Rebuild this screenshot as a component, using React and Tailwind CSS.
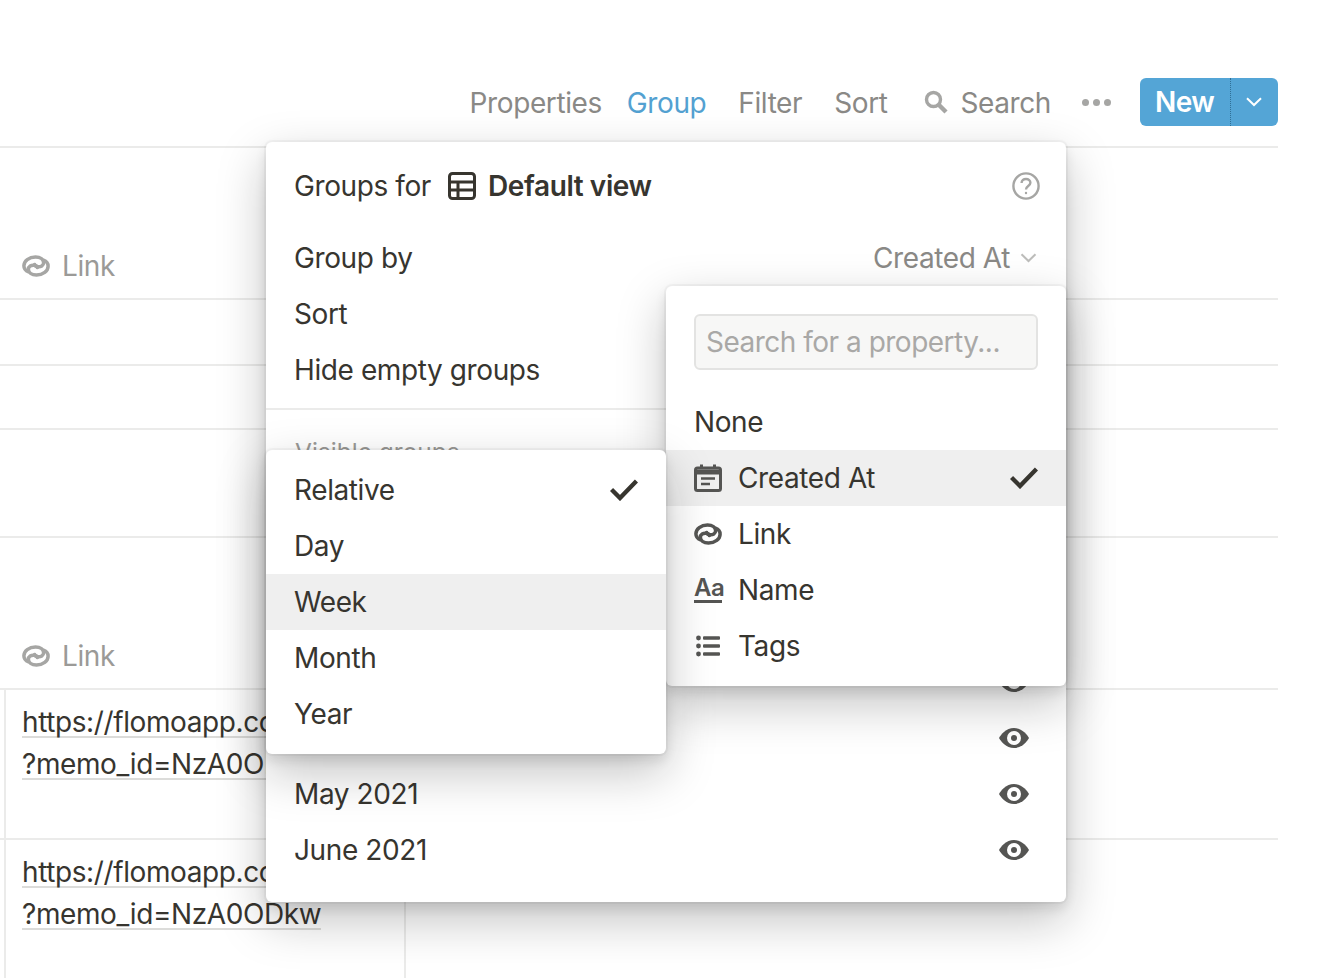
import React from "react";

function LinkIcon({ className = "" }) {
  return (
    <svg viewBox="0 0 28 22" className={className} fill="none" stroke="currentColor" strokeWidth="3.5" strokeLinecap="round">
      <path d="M6.5 16.8 C3.6 15.8 1.9 13.6 1.9 10.8 C1.9 6 7 2.1 13.5 2.1 C18.5 2.1 21.6 4.6 21.6 7.8 C21.6 10.6 18.8 12.2 15.8 11.8 C14 11.5 12.8 10.6 12.6 9.4" />
      <path d="M21.5 5.2 C24.4 6.2 26.1 8.4 26.1 11.2 C26.1 16 21 19.9 14.5 19.9 C9.5 19.9 6.4 17.4 6.4 14.2 C6.4 11.4 9.2 9.8 12.2 10.2 C14 10.5 15.2 11.4 15.4 12.6" />
    </svg>
  );
}

function Eye() {
  return (
    <svg viewBox="0 0 30 20" className="h-[20px] w-[30px] text-[#555553]">
      <path fill="currentColor" d="M15 0 C23 0 28 6.5 30 10 C28 13.5 23 20 15 20 C7 20 2 13.5 0 10 C2 6.5 7 0 15 0 Z" />
      <circle cx="15" cy="10" r="7" fill="#fff" />
      <circle cx="15" cy="10" r="3" fill="currentColor" />
    </svg>
  );
}

function Check() {
  return (
    <svg viewBox="0 0 28 22" className="h-[22px] w-[28px] text-[#37352f]" fill="none" stroke="currentColor" strokeWidth="4.4">
      <path d="M1.5 10.5 L10 19 L26.5 2" />
    </svg>
  );
}

function Chevron({ className = "" }) {
  return (
    <svg viewBox="0 0 16 10" className={className} fill="none" stroke="currentColor" strokeWidth="2">
      <path d="M1 1.2 L8 8 L15 1.2" />
    </svg>
  );
}

function TableRow({ h, children, className = "" }) {
  return <div className={`border-t-2 border-[#ebebea] ${h} ${className}`}>{children}</div>;
}

function LinkHeader() {
  return (
    <div className="flex h-full items-end pb-[14px] pl-[22px] text-[#9b9a97]">
      <LinkIcon className="mb-[7px] mr-[12px] h-[22px] w-[28px] text-[#a6a6a4]" />
      <span>Link</span>
    </div>
  );
}

function UrlCell() {
  return (
    <div className="h-full w-[402px] border-l-2 border-r-2 border-[#ebebea] pl-[16px] pt-[14px] text-[#37352f]">
      <div className="h-[42px]"><span className="inline-block whitespace-nowrap border-b-2 border-[#dcdcda] leading-[28px]">https://flomoapp.com/mine/</span></div>
      <div className="h-[42px]"><span className="inline-block whitespace-nowrap border-b-2 border-[#dcdcda] leading-[28px]">?memo_id=NzA0ODkw</span></div>
    </div>
  );
}

function MenuRow({ children, right, active }) {
  return (
    <div className={`flex h-[56px] items-center justify-between pl-[28px] pr-[28px] ${active ? "bg-[#efefef]" : ""}`}>
      {children}
      {right}
    </div>
  );
}

const shadow = "shadow-[0_0_0_2px_rgba(15,15,15,0.03),0_6px_12px_rgba(15,15,15,0.1),0_18px_48px_rgba(15,15,15,0.25)]";

export default function App() {
  return (
    <div className="relative h-[978px] w-[1324px] overflow-hidden bg-white text-[28px] leading-[36px] tracking-[-0.4px] text-[#37352f]" style={{ fontFamily: "Inter, 'Noto Sans', sans-serif" }}>
      {/* toolbar */}
      <div className="flex h-[146px] items-start justify-end pr-[46px] pt-[78px] text-[#8a8986]">
        <div className="flex h-[48px] items-center">
          <span className="mr-[25px] pt-[2px]">Properties</span>
          <span className="mr-[32px] pt-[2px] text-[#53a1d1]">Group</span>
          <span className="mr-[32px] pt-[2px]">Filter</span>
          <span className="mr-[37px] pt-[2px]">Sort</span>
          <svg viewBox="0 0 24 24" className="mr-[12px] h-[24px] w-[24px] text-[#a6a6a4]" fill="none" stroke="currentColor">
            <circle cx="9.5" cy="9.5" r="7" strokeWidth="3.4" />
            <path d="M14.5 14.5 L22 22" strokeWidth="4.4" />
          </svg>
          <span className="mr-[31px] pt-[2px]">Search</span>
          <span className="mr-[29px] flex gap-[4px]">
            <i className="h-[7px] w-[7px] rounded-full bg-[#a6a6a4]" />
            <i className="h-[7px] w-[7px] rounded-full bg-[#a6a6a4]" />
            <i className="h-[7px] w-[7px] rounded-full bg-[#a6a6a4]" />
          </span>
          <div className="flex h-[48px] w-[138px] overflow-hidden rounded-[6px] bg-[#54a5d6] text-white">
            <div className="flex w-[91px] items-center border-r border-dotted border-[#2f6f96] pl-[15px] font-semibold tracking-[-0.6px]">New</div>
            <div className="flex flex-1 items-center justify-center pr-[2px]">
              <Chevron className="h-[10px] w-[16px]" />
            </div>
          </div>
        </div>
      </div>

      {/* table behind the menus */}
      <div className="w-[1278px]">
        <TableRow h="h-[152px]"><LinkHeader /></TableRow>
        <TableRow h="h-[66px]" />
        <TableRow h="h-[64px]" />
        <TableRow h="h-[108px]" />
        <TableRow h="h-[152px]"><LinkHeader /></TableRow>
        <TableRow h="h-[150px]" className="pl-[4px]"><UrlCell /></TableRow>
        <TableRow h="h-[140px]" className="pl-[4px]"><UrlCell /></TableRow>
      </div>

      {/* main panel */}
      <div className={`absolute left-[266px] top-[142px] h-[760px] w-[800px] rounded-[6px] bg-white ${shadow}`}>
        <div className="flex h-[88px] items-center justify-between pl-[28px] pr-[26px]">
          <div className="flex items-center">
            <span>Groups for</span>
            <svg viewBox="0 0 28 28" className="ml-[17px] mr-[12px] h-[28px] w-[28px]" fill="none" stroke="#37352f" strokeWidth="3">
              <rect x="1.5" y="1.5" width="25" height="25" rx="3" />
              <path d="M1.5 10 H26.5 M1.5 18 H26.5 M10 10 V26.5" />
            </svg>
            <span className="font-semibold">Default view</span>
          </div>
          <svg viewBox="0 0 28 28" className="h-[28px] w-[28px] text-[#a6a6a4]" fill="none" stroke="currentColor" strokeWidth="2.4">
            <circle cx="14" cy="14" r="12.6" />
            <path d="M9.6 11 C9.6 8.4 11.6 7 14 7 C16.6 7 18.4 8.6 18.4 10.8 C18.4 14 14 14 14 17.4" />
            <circle cx="14" cy="21" r="1.2" fill="currentColor" stroke="none" />
          </svg>
        </div>
        <div className="flex h-[56px] items-center justify-between pl-[28px] pr-[29px]">
          <span>Group by</span>
          <span className="flex items-center text-[#8a8986]">
            Created At
            <Chevron className="ml-[10px] h-[10px] w-[17px] text-[#bdbdbb]" />
          </span>
        </div>
        <div className="flex h-[56px] items-center pl-[28px]">Sort</div>
        <div className="flex h-[56px] items-center pl-[28px]">Hide empty groups</div>
        <div className="mt-[10px] border-t-2 border-[#ebebea] pl-[29px] pt-[24px] text-[24.5px] tracking-normal text-[#9b9a97]">Visible groups</div>
        <div className="mt-[184px] flex h-[56px] items-center justify-end pr-[37px]"><Eye /></div>
        <div className="flex h-[56px] items-center justify-end pr-[37px]"><Eye /></div>
        <div className="flex h-[56px] items-center justify-between pl-[28px] pr-[37px]"><span>May 2021</span><Eye /></div>
        <div className="flex h-[56px] items-center justify-between pl-[28px] pr-[37px]"><span>June 2021</span><Eye /></div>
      </div>

      {/* property menu */}
      <div className={`absolute left-[666px] top-[286px] h-[400px] w-[400px] rounded-[6px] bg-white ${shadow}`}>
        <div className="px-[28px] pt-[28px]">
          <div className="flex h-[56px] items-center rounded-[6px] border-2 border-[#e3e3e2] bg-[#f7f7f6] pl-[10px] tracking-[-0.5px] text-[#a9a8a6]">Search for a property...</div>
        </div>
        <div className="mt-[24px] flex h-[56px] items-center pl-[28px]">None</div>
        <MenuRow active right={<Check />}>
          <span className="flex items-center">
            <svg viewBox="0 0 28 28" className="mr-[16px] h-[28px] w-[28px] text-[#555553]" fill="none" stroke="currentColor">
              <rect x="1.5" y="4" width="25" height="22.5" rx="2" strokeWidth="3" />
              <path d="M1.5 6 H26.5 V10 H1.5 Z" fill="currentColor" strokeWidth="1" />
              <path d="M7.5 0.5 V4 M20.5 0.5 V4" strokeWidth="3" />
              <path d="M7 14.5 H21 M7 20 H16" strokeWidth="2.6" />
            </svg>
            Created At
          </span>
        </MenuRow>
        <MenuRow>
          <span className="flex items-center">
            <LinkIcon className="mr-[16px] h-[22px] w-[28px] text-[#555553]" />
            Link
          </span>
        </MenuRow>
        <MenuRow>
          <span className="flex items-center">
            <span className="mr-[16px] block h-[26px] w-[28px] border-b-[3px] border-[#555553] text-center text-[24px] font-semibold leading-[21px] tracking-[-0.5px] text-[#555553]">Aa</span>
            Name
          </span>
        </MenuRow>
        <MenuRow>
          <span className="flex items-center">
            <svg viewBox="0 0 28 28" className="mr-[16px] h-[28px] w-[28px] text-[#555553]" fill="currentColor">
              <circle cx="4.5" cy="6" r="2.4" /><circle cx="4.5" cy="14" r="2.4" /><circle cx="4.5" cy="22" r="2.4" />
              <rect x="9" y="4.2" width="17" height="3.6" rx="1" /><rect x="9" y="12.2" width="17" height="3.6" rx="1" /><rect x="9" y="20.2" width="17" height="3.6" rx="1" />
            </svg>
            Tags
          </span>
        </MenuRow>
      </div>

      {/* date granularity menu */}
      <div className={`absolute left-[266px] top-[450px] w-[400px] rounded-[6px] bg-white py-[12px] ${shadow}`}>
        <MenuRow right={<Check />}><span>Relative</span></MenuRow>
        <MenuRow><span>Day</span></MenuRow>
        <MenuRow active><span>Week</span></MenuRow>
        <MenuRow><span>Month</span></MenuRow>
        <MenuRow><span>Year</span></MenuRow>
      </div>
    </div>
  );
}
